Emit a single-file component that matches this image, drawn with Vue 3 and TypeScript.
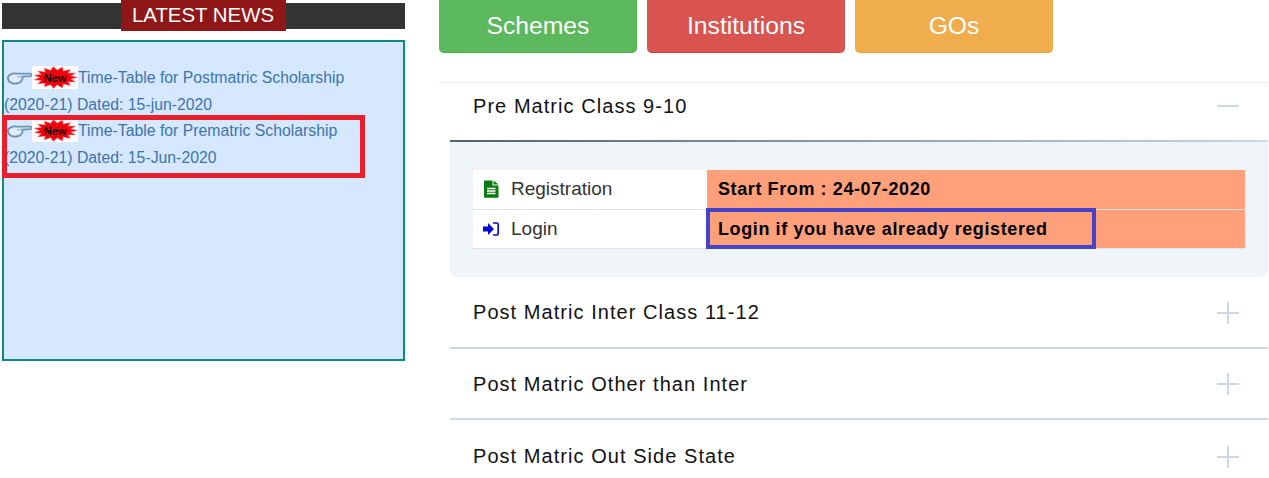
<script setup lang="ts">
const star = (n: number, outerX: number, outerY: number, innerX: number, innerY: number): string =>
  Array.from({ length: n }, (_, i) => {
    const a = (i / n) * Math.PI * 2
    const rx = i % 2 ? innerX : outerX
    const ry = i % 2 ? innerY : outerY
    return `${(23.5 + rx * Math.cos(a)).toFixed(1)},${(11.5 + ry * Math.sin(a)).toFixed(1)}`
  }).join(' ')

const burstHalo = star(30, 23, 11.5, 17, 8)
const burst = star(30, 21, 10.5, 15, 7)

const news = [
  { title: 'Time-Table for Postmatric Scholarship', sub: '(2020-21) Dated: 15-jun-2020' },
  { title: 'Time-Table for Prematric Scholarship', sub: '(2020-21) Dated: 15-Jun-2020' },
]
const buttons = [
  { label: 'Schemes', cls: 'green' },
  { label: 'Institutions', cls: 'red' },
  { label: 'GOs', cls: 'amber' },
]
const closed = ['Post Matric Inter Class 11-12', 'Post Matric Other than Inter', 'Post Matric Out Side State']
</script>

<template>
  <div class="page">
    <aside class="left">
      <div class="bar"><h2 class="bar-title">LATEST NEWS</h2></div>
      <div class="news">
        <a v-for="n in news" :key="n.title" class="news-item">
          <svg class="hand" width="26" height="14" viewBox="0 0 26 14">
            <path d="M1.2 5.5C3 3 6.5 2 10 2.6L23.5 2.6C25.2 2.8 25.2 4.9 23.5 5.1L15.5 5.6C15.8 8 14.5 11 11.5 12C7.5 13.2 3.2 12.4 1.6 9.5C1 8.2 0.8 6.8 1.2 5.5Z" fill="#dfecfb" stroke="#6f93b3" stroke-width="1.9" />
            <path d="M10 5.8L15.5 5.6" fill="none" stroke="#8fabc4" stroke-width="1" />
          </svg>
          <svg class="burst" width="46" height="23" viewBox="0 0 46 23">
            <rect width="46" height="23" fill="#fff" />
            <polygon :points="burstHalo" fill="#ff8f8f" />
            <polygon :points="burst" fill="#f5000c" />
            <text x="23" y="15.5" text-anchor="middle" class="burst-text">New</text>
          </svg>
          <span>{{ n.title }}</span><br />{{ n.sub }}
        </a>
        <div class="mark-red"></div>
      </div>
    </aside>

    <main class="right">
      <nav class="buttons">
        <a v-for="b in buttons" :key="b.label" class="btn" :class="b.cls">{{ b.label }}</a>
      </nav>
      <section class="accordion">
        <header class="head open">
          <span>Pre Matric Class 9-10</span>
          <i class="sign minus"></i>
        </header>
        <div class="panel">
          <div class="table">
            <div class="cell name">
              <svg width="15" height="18" viewBox="0 0 15 18">
                <path d="M0.5 1.2Q0.5 0.5 1.2 0.5H9V5.5H15V17Q15 17.7 14.3 17.7H1.2Q0.5 17.7 0.5 17Z" fill="#0b7a0e" />
                <path d="M10 0.5L15 4.5H10Z" fill="#0b7a0e" />
                <path d="M3.5 8.5H12M3.5 11H12M3.5 13.5H12" stroke="#fff" stroke-width="1.3" />
              </svg>
              <span>Registration</span>
            </div>
            <div class="cell note">Start From : 24-07-2020</div>
            <div class="cell name">
              <svg width="16" height="14" viewBox="0 0 16 14">
                <path d="M0 4.5H5V1L11 7L5 13V9.5H0Z" fill="#0606dc" />
                <path d="M10 1H13.5Q15.2 1 15.2 2.7V11.3Q15.2 13 13.5 13H10" fill="none" stroke="#0606dc" stroke-width="1.7" />
              </svg>
              <span>Login</span>
            </div>
            <div class="cell note">
              Login if you have already registered
              <div class="mark-blue"></div>
            </div>
          </div>
        </div>
        <header v-for="c in closed" :key="c" class="head closed">
          <span>{{ c }}</span>
          <i class="sign plus"></i>
        </header>
      </section>
    </main>
  </div>
</template>

<style>
html, body { margin: 0; overflow: hidden; background: #fff; }
</style>

<style scoped>
.page {
  display: flex;
  height: 478px;
  overflow: hidden;
  font-family: "Liberation Sans", Arial, sans-serif;
}
.left { width: 403px; margin-left: 2px; flex: none; }
.bar {
  height: 26px;
  margin-top: 3px;
  background: #333;
  display: flex;
  justify-content: center;
}
.bar-title {
  margin: -3px 1px -2px 0;
  width: 165px;
  height: 31px;
  background: #8f1717;
  color: #fff;
  font-size: 20.4px;
  font-weight: 400;
  line-height: 31px;
  text-align: center;
}
.news {
  position: relative;
  box-sizing: border-box;
  height: 321px;
  margin-top: 11px;
  padding-top: 23px;
  border: 2px solid #0d8a80;
  background: #d6e8ff;
  color: #3c74ad;
  font-size: 15.8px;
  line-height: 26.5px;
}
.news-item { display: block; }
.hand { vertical-align: -2px; margin-left: 3px; margin-right: -1px; }
.burst { vertical-align: -6px; }
.burst-text { font: 700 11px "Liberation Sans", Arial, sans-serif; fill: #000; }
.mark-red {
  position: absolute;
  left: -2px;
  top: 73px;
  width: 363px;
  height: 63px;
  box-sizing: border-box;
  border: 5px solid #e8202e;
}
.right { margin-left: 34px; width: 829px; flex: none; }
.buttons { display: flex; gap: 10px; height: 53px; }
.btn {
  box-sizing: border-box;
  width: 198px;
  height: 53px;
  border-radius: 0 0 5px 5px;
  color: #fff;
  font-size: 24.7px;
  line-height: 52px;
  text-align: center;
}
.green { background: #5cb85c; border-bottom: 1px solid #4cae4c; }
.red { background: #d9534f; border-bottom: 1px solid #d43f3a; }
.amber { background: #f0ad4e; border-bottom: 1px solid #eea236; }
.accordion {
  margin-top: 29px;
  padding-left: 11px;
  border-top: 1px solid #eee;
}
.head {
  box-sizing: border-box;
  height: 71.5px;
  padding: 0 29px 0 23px;
  display: flex;
  align-items: center;
  justify-content: space-between;
  color: #111;
  font-size: 20px;
  letter-spacing: 1.05px;
  border-bottom: 2px solid #ced8e0;
}
.head.closed { padding-top: 2px; }
.head.open {
  height: 59px;
  border-bottom: 0;
  padding-bottom: 13px;
  position: relative;
}
.head.open::after {
  content: "";
  position: absolute;
  left: 0;
  right: 0;
  bottom: 0;
  height: 2px;
  background: linear-gradient(90deg, #56606e, #ced8e2);
}
.head:last-child { border-bottom: 0; }
.sign { position: relative; width: 22px; height: 22px; flex: none; }
.sign::before, .plus::after {
  content: "";
  position: absolute;
  background: #ced8e2;
}
.sign::before { left: 0; right: 0; top: 10px; height: 2px; }
.plus::after { top: 0; bottom: 0; left: 10px; width: 2px; }
.panel {
  box-sizing: border-box;
  height: 135px;
  padding: 28px 23px;
  background: #eff4f9;
  border-radius: 0 0 6px 6px;
}
.table {
  display: grid;
  grid-template-columns: 234px 538px;
  grid-template-rows: 40px 39px;
}
.cell {
  display: flex;
  align-items: center;
  box-sizing: border-box;
  border-bottom: 1px solid #dde1e5;
  position: relative;
}
.name {
  background: #fff;
  padding-left: 10px;
  padding-bottom: 1px;
  gap: 12px;
  color: #333;
  font-size: 19px;
}
.name svg { width: 16px; flex: none; }
.note {
  background: #ffa07a;
  padding-left: 11px;
  color: #000;
  font-size: 18px;
  font-weight: 700;
  letter-spacing: 0.6px;
}
.mark-blue {
  position: absolute;
  left: -1px;
  top: -2px;
  width: 390px;
  height: 41px;
  box-sizing: border-box;
  border: 4px solid #4444c8;
}
</style>
